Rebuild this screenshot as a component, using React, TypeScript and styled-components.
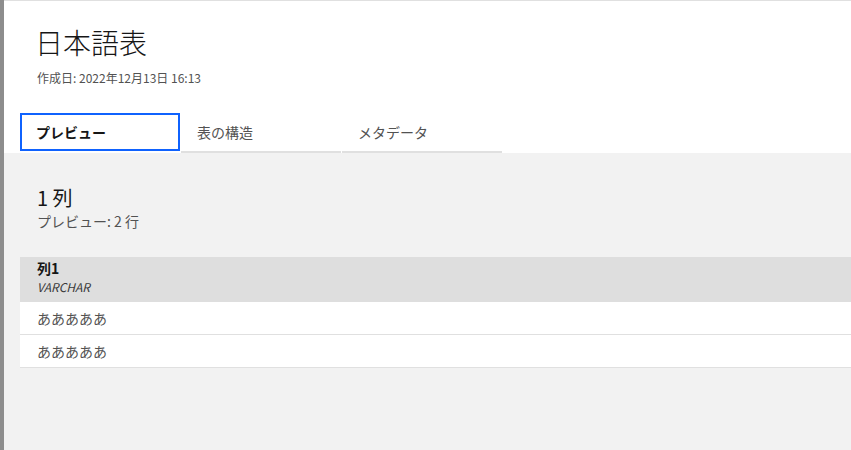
import React from 'react';
import styled, { createGlobalStyle } from 'styled-components';

const GlobalStyle = createGlobalStyle`
  html, body {
    margin: 0;
    padding: 0;
    background: #f2f2f2;
  }
  body {
    font-family: 'Noto Sans CJK JP', 'Noto Sans', sans-serif;
    color: #161616;
  }
`;

const Page = styled.div`
  display: flex;
  min-height: 450px;
`;

const SideEdge = styled.div`
  width: 4px;
  flex-shrink: 0;
  background: #8d8d8d;
`;

const Main = styled.div`
  flex: 1;
  display: flex;
  flex-direction: column;
  min-width: 0;
`;

const Header = styled.header`
  background: #ffffff;
  border-top: 1px solid #e0e0e0;
  padding: 23px 0 0 16px;
`;

const TitleBlock = styled.div`
  padding: 0 17px;
`;

const Title = styled.h1`
  margin: 0 0 0 -2px;
  font-size: 28px;
  line-height: 36px;
  font-weight: 300;
  color: #161616;
`;

const Created = styled.div`
  margin-top: 10px;
  font-size: 12px;
  line-height: 16px;
  color: #525252;
`;

const TabList = styled.div`
  display: flex;
  gap: 1px;
  margin-top: 27px;
`;

const Tab = styled.button<{ $active?: boolean }>`
  box-sizing: border-box;
  width: 160px;
  height: 40px;
  padding: 0 16px;
  text-align: left;
  background: transparent;
  border: none;
  border-bottom: 2px solid ${(p) => (p.$active ? 'transparent' : '#e0e0e0')};
  font-family: inherit;
  font-size: 14px;
  line-height: 18px;
  font-weight: ${(p) => (p.$active ? 700 : 400)};
  color: ${(p) => (p.$active ? '#161616' : '#525252')};
  box-shadow: ${(p) => (p.$active ? 'inset 0 0 0 2px #0f62fe' : 'none')};
  cursor: pointer;
`;

const Content = styled.section`
  padding: 31px 0 0 16px;
`;

const Summary = styled.div`
  padding: 0 17px;
`;

const ColumnCount = styled.div`
  font-size: 20px;
  line-height: 28px;
  color: #161616;
`;

const RowCount = styled.div`
  font-size: 14px;
  line-height: 18px;
  color: #525252;
`;

const Table = styled.div`
  margin-top: 27px;
  display: flex;
  flex-direction: column;
`;

const HeadCell = styled.div`
  background: #dedede;
  height: 45px;
  box-sizing: border-box;
  padding: 1px 17px 0;
`;

const ColName = styled.div`
  font-size: 14px;
  line-height: 20px;
  font-weight: 700;
  color: #161616;
`;

const ColType = styled.div`
  font-size: 12px;
  line-height: 17px;
  font-style: italic;
  color: #393939;
`;

const Row = styled.div`
  background: #ffffff;
  height: 32px;
  border-bottom: 1px solid #e0e0e0;
  padding: 0 17px;
  display: flex;
  align-items: center;
  font-size: 14px;
  color: #525252;
`;

const tabs = ['プレビュー', '表の構造', 'メタデータ'];
const rows = ['あああああ', 'あああああ'];

export default function App() {
  return (
    <>
      <GlobalStyle />
      <Page>
        <SideEdge />
        <Main>
          <Header>
            <TitleBlock>
              <Title>日本語表</Title>
              <Created>作成日: 2022年12月13日 16:13</Created>
            </TitleBlock>
            <TabList>
              {tabs.map((t, i) => (
                <Tab key={t} $active={i === 0}>
                  {t}
                </Tab>
              ))}
            </TabList>
          </Header>
          <Content>
            <Summary>
              <ColumnCount>1 列</ColumnCount>
              <RowCount>プレビュー: 2 行</RowCount>
            </Summary>
            <Table>
              <HeadCell>
                <ColName>列1</ColName>
                <ColType>VARCHAR</ColType>
              </HeadCell>
              {rows.map((r, i) => (
                <Row key={i}>{r}</Row>
              ))}
            </Table>
          </Content>
        </Main>
      </Page>
    </>
  );
}
